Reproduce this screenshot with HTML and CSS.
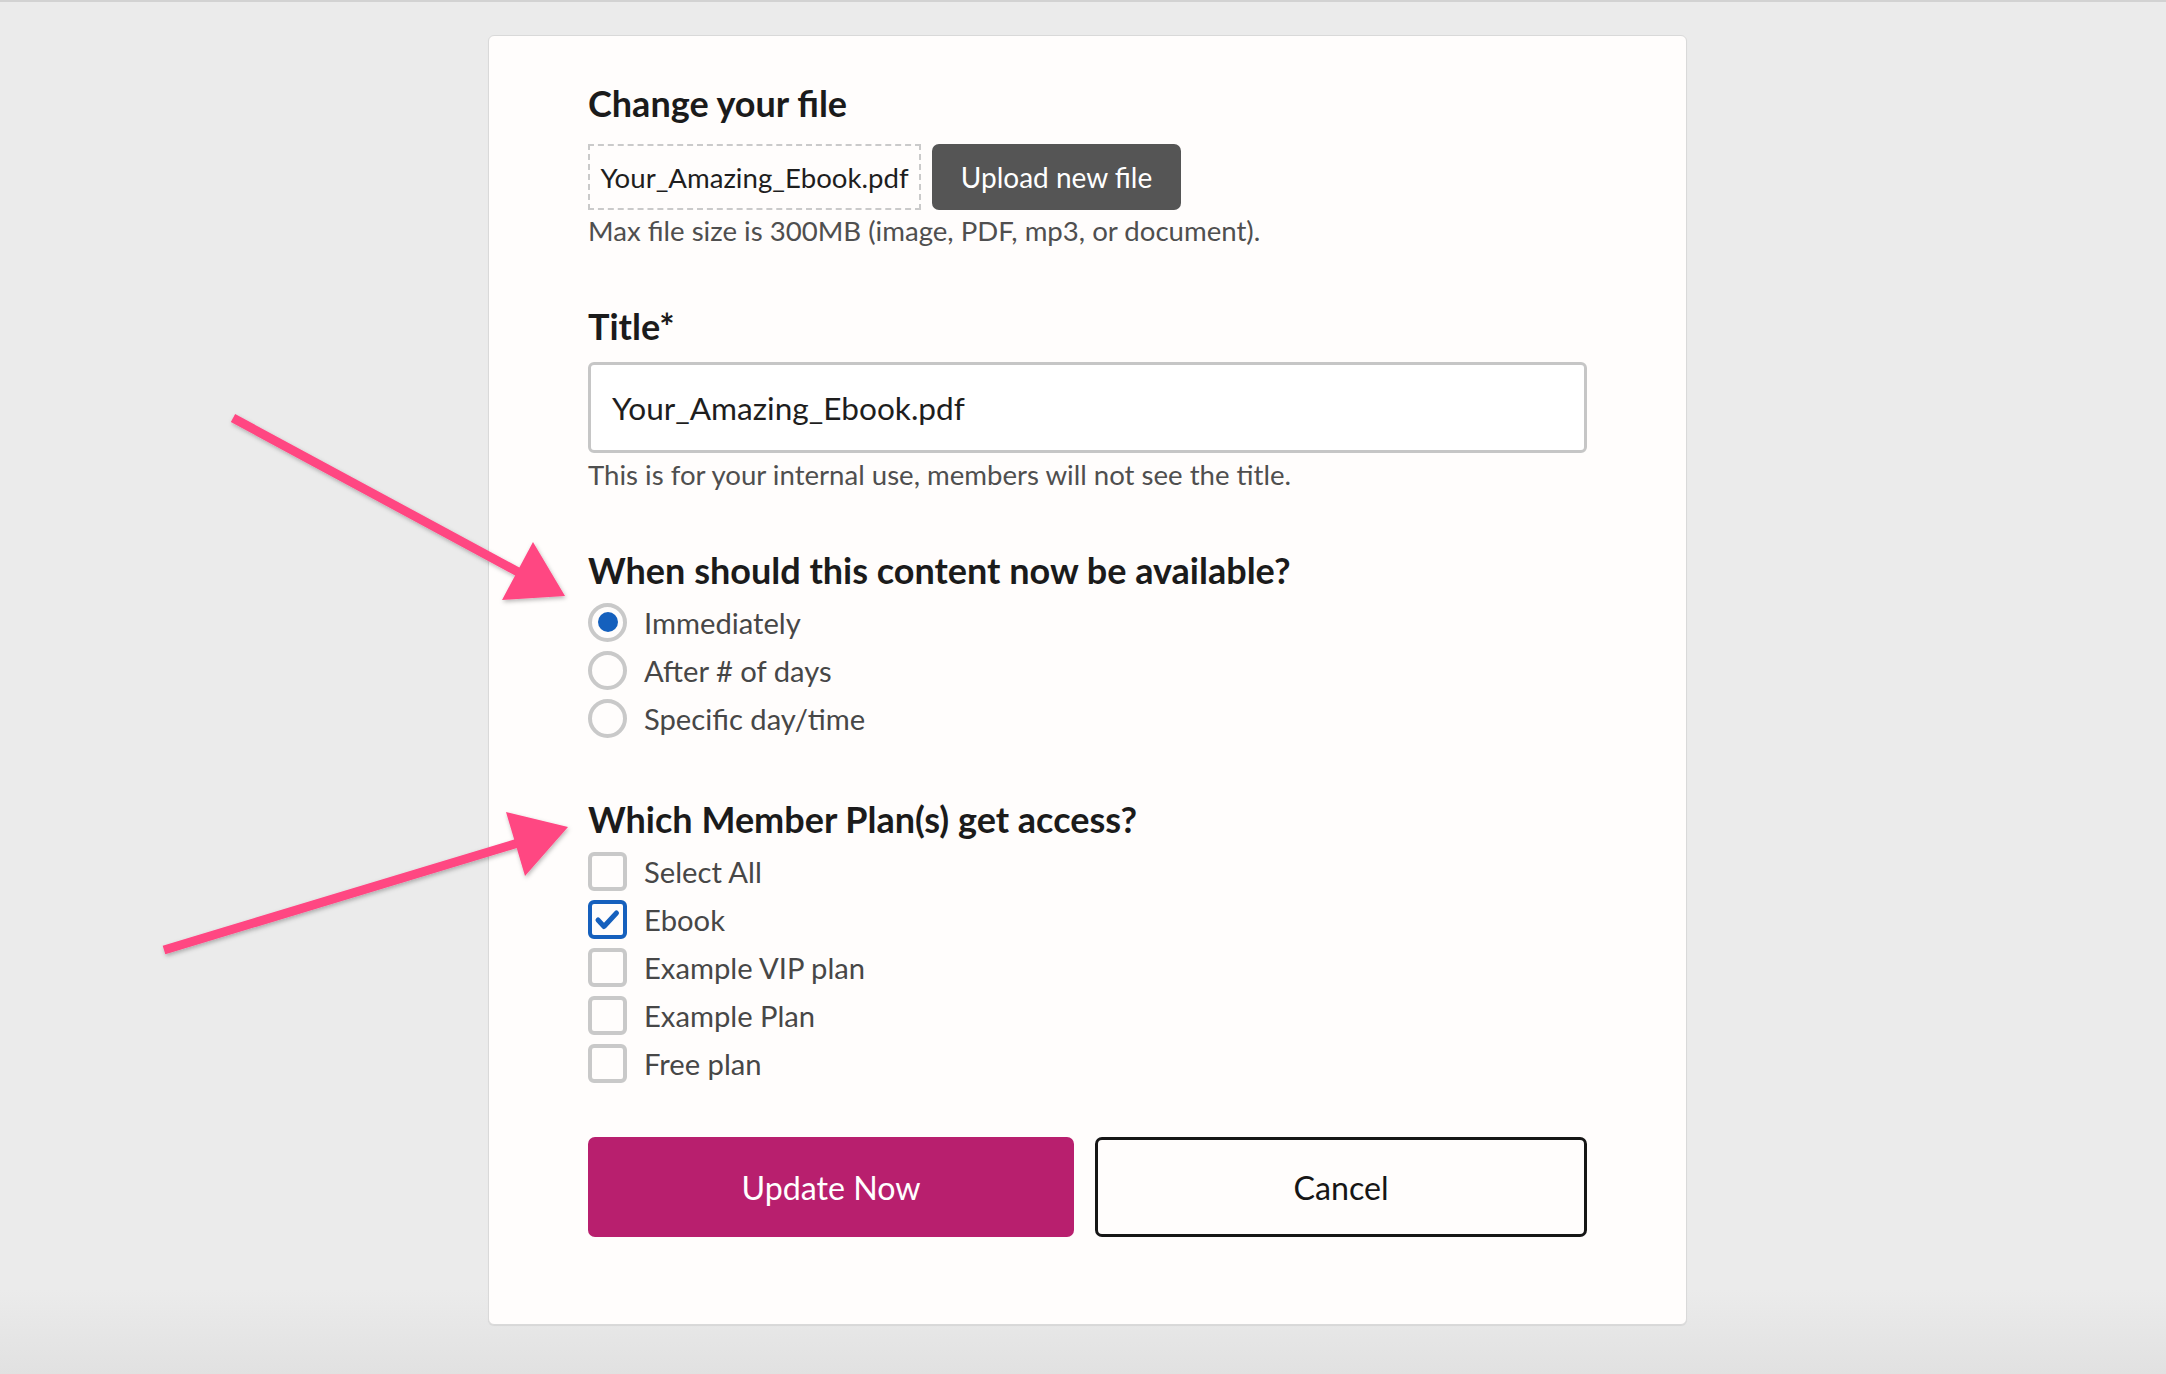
FILE: index.html
```html
<!DOCTYPE html>
<html lang="en">
<head>
<meta charset="utf-8">
<title>Change your file</title>
<link rel="stylesheet" href="styles.css">
</head>
<body>
<div class="topline"></div>
<main class="page">
  <section class="card">
    <h2 class="heading">Change your file</h2>
    <div class="file-row">
      <div class="file-name">Your_Amazing_Ebook.pdf</div>
      <button class="btn-upload" type="button">Upload new file</button>
    </div>
    <p class="help help-tight">Max file size is 300MB (image, PDF, mp3, or document).</p>

    <h2 class="heading section">Title*</h2>
    <div class="text-input">Your_Amazing_Ebook.pdf</div>
    <p class="help help-tight">This is for your internal use, members will not see the title.</p>

    <h2 class="heading section">When should this content now be available?</h2>
    <ul class="options">
      <li class="option"><span class="radio checked"></span><span class="label">Immediately</span></li>
      <li class="option"><span class="radio"></span><span class="label">After # of days</span></li>
      <li class="option"><span class="radio"></span><span class="label">Specific day/time</span></li>
    </ul>

    <h2 class="heading section">Which Member Plan(s) get access?</h2>
    <ul class="options">
      <li class="option"><span class="checkbox"></span><span class="label">Select All</span></li>
      <li class="option"><span class="checkbox checked"><svg viewBox="0 0 39 39" width="39" height="39"><polyline points="10,20 16,26.5 28.5,13" fill="none" stroke="#1660bd" stroke-width="5" stroke-linecap="round" stroke-linejoin="round"/></svg></span><span class="label">Ebook</span></li>
      <li class="option"><span class="checkbox"></span><span class="label">Example VIP plan</span></li>
      <li class="option"><span class="checkbox"></span><span class="label">Example Plan</span></li>
      <li class="option"><span class="checkbox"></span><span class="label">Free plan</span></li>
    </ul>

    <div class="actions">
      <button class="btn btn-primary" type="button">Update Now</button>
      <button class="btn btn-secondary" type="button">Cancel</button>
    </div>
  </section>
</main>

<svg class="arrows" viewBox="0 0 2166 1374" width="2166" height="1374" aria-hidden="true">
  <defs>
    <filter id="shadow" x="-20%" y="-20%" width="140%" height="140%">
      <feDropShadow dx="1" dy="2" stdDeviation="2" flood-color="#000" flood-opacity="0.28"/>
    </filter>
  </defs>
  <g filter="url(#shadow)" fill="#ff4682">
    <line x1="233" y1="418" x2="520" y2="573" stroke="#ff4682" stroke-width="9"/>
    <polygon points="533,542 565,596 502,600"/>
    <line x1="164" y1="950" x2="518" y2="843" stroke="#ff4682" stroke-width="9"/>
    <polygon points="506,812 568,827 525,876"/>
  </g>
</svg>
</body>
</html>
```

FILE: styles.css
```css
* { box-sizing: border-box; }

html, body {
  margin: 0;
  padding: 0;
}

body {
  width: 2166px;
  height: 1374px;
  overflow: hidden;
  position: relative;
  background: linear-gradient(to bottom, #ebebeb 0, #ebebeb 1290px, #e1e1e1 1374px);
  font-family: Lato, "Open Sans", "Liberation Sans", sans-serif;
}

.topline {
  height: 2px;
  background: #d2d2d2;
}

.page {
  padding: 33px 0 0 488px;
}

.card {
  width: 1199px;
  height: 1290px;
  background: #fffdfc;
  border: 1px solid #d9d9d9;
  border-radius: 6px;
  box-shadow: 0 1px 1px rgba(0, 0, 0, 0.07);
  padding: 45px 99px 0 99px;
}

.heading {
  margin: 0;
  font-size: 36px;
  line-height: 44px;
  font-weight: 700;
  color: #1b1b1b;
}

.heading.section {
  margin-top: 55px;
}

.file-row {
  display: flex;
  gap: 11px;
  margin-top: 19px;
  height: 66px;
}

.file-name {
  width: 333px;
  height: 66px;
  border: 2px dashed #cacaca;
  display: flex;
  align-items: center;
  justify-content: center;
  font-size: 27.6px;
  color: #1e1e1e;
  white-space: nowrap;
}

.btn-upload {
  width: 249px;
  height: 66px;
  border: 0;
  border-radius: 7px;
  background: #555555;
  color: #ffffff;
  font-family: inherit;
  font-size: 28px;
  padding: 0;
}

.help {
  margin: 0;
  font-size: 27.6px;
  line-height: 36px;
  color: #4f4f4f;
}

.help-tight {
  margin-top: 3px;
}

.text-input {
  margin-top: 14px;
  height: 91px;
  border: 3px solid #c6c6c6;
  border-radius: 6px;
  background: #ffffff;
  display: flex;
  align-items: center;
  padding-left: 21px;
  font-size: 31.6px;
  color: #1e1e1e;
}

.text-input + .help {
  margin-top: 4px;
}

.options {
  list-style: none;
  margin: 6px 0 0 0;
  padding: 0;
}

.option {
  height: 48px;
  display: flex;
  align-items: center;
  gap: 17px;
}

.label {
  font-size: 29.2px;
  color: #474747;
}

.radio {
  width: 39px;
  height: 39px;
  border: 4px solid #c9c9c9;
  border-radius: 50%;
  display: flex;
  align-items: center;
  justify-content: center;
  flex: none;
}

.radio.checked::after {
  content: "";
  width: 20px;
  height: 20px;
  border-radius: 50%;
  background: #1560bd;
}

.checkbox {
  width: 39px;
  height: 39px;
  border: 4px solid #c9c9c9;
  border-radius: 6px;
  flex: none;
  position: relative;
  overflow: hidden;
}

.checkbox.checked {
  border-color: #1660bd;
}

.checkbox svg {
  position: absolute;
  left: -4px;
  top: -4px;
}

.heading.section + .options {
  margin-top: 6px;
}

.actions {
  display: flex;
  gap: 21px;
  margin-top: 50px;
}

.btn {
  flex: 1;
  height: 100px;
  border-radius: 7px;
  font-family: inherit;
  font-size: 32.2px;
  padding: 0;
}

.btn-primary {
  background: #b81f6e;
  border: 0;
  color: #ffffff;
}

.btn-secondary {
  background: #fffdfc;
  border: 3px solid #161616;
  color: #161616;
}

.arrows {
  position: absolute;
  left: 0;
  top: 0;
  pointer-events: none;
}
```
